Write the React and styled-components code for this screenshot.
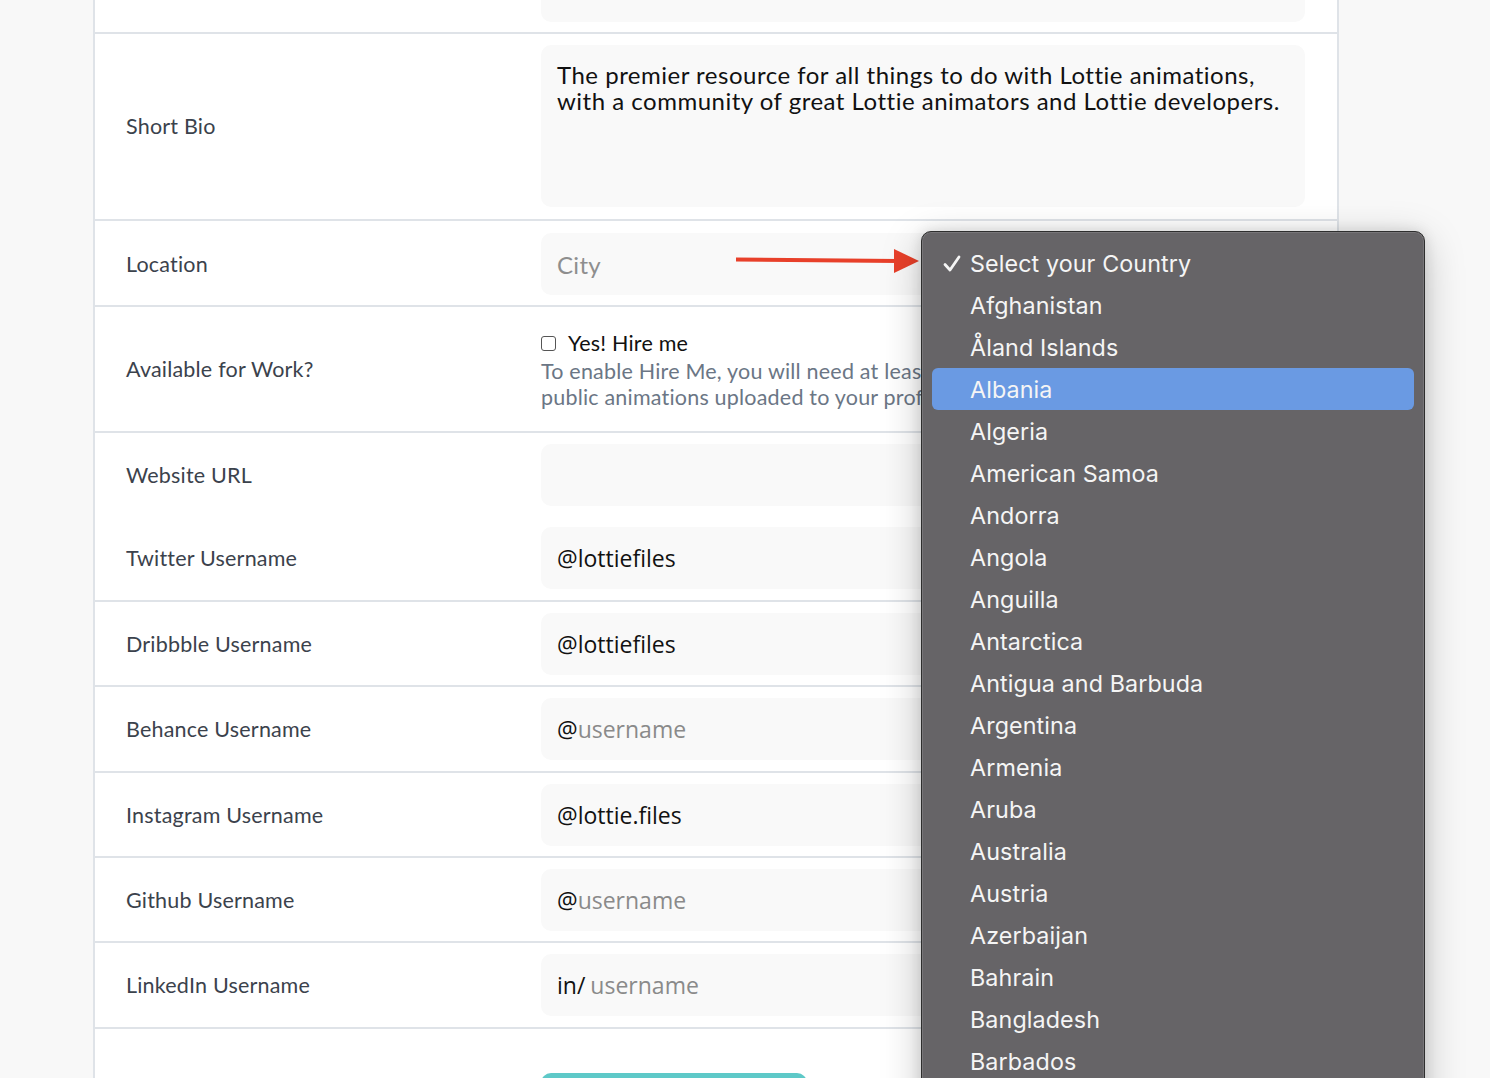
import React from "react";
import styled, { createGlobalStyle } from "styled-components";

const GlobalStyle = createGlobalStyle`
  html, body {
    margin: 0;
    padding: 0;
    background: #f8f8f8;
    overflow: hidden;
    height: 1078px;
  }
  * { box-sizing: border-box; }
`;

const Page = styled.div`
  position: relative;
  width: 1490px;
  height: 1078px;
  overflow: hidden;
  font-family: Lato, "Open Sans", sans-serif;
`;

const Card = styled.div`
  margin-left: 93px;
  margin-top: -51px;
  width: 1246px;
  background: #fff;
  border-left: 2px solid #dfe3e8;
  border-right: 2px solid #dfe3e8;
`;

const Row = styled.div`
  display: grid;
  grid-template-columns: 415px 1fr;
  align-items: center;
  padding: ${(p) => p.$pad || "11px 32px 10.4px 31px"};
  border-bottom: ${(p) => (p.$noBorder ? "none" : "2px solid #dfe3e8")};
`;

const Label = styled.div`
  font-size: 21.5px;
  color: #3b424c;
  letter-spacing: 0.2px;
`;

const Field = styled.div`
  height: ${(p) => p.$h || 62}px;
  background: #f9f9f9;
  border-radius: 10px;
  display: flex;
  align-items: ${(p) => (p.$top ? "flex-start" : "center")};
  padding: ${(p) => (p.$top ? "17px 16px" : "0 16px")};
  font-family: "Open Sans", sans-serif;
  font-size: 23px;
  color: #111;
`;

const BioText = styled.div`
  font-family: Lato, sans-serif;
  font-size: 24px;
  letter-spacing: 0.5px;
  line-height: 26px;
  color: #111;
`;

const Prefix = styled.span`
  color: #111;
  margin-right: ${(p) => p.$gap || 0}px;
`;

const Placeholder = styled.span`
  color: #8a8a8a;
`;

const CityText = styled.span`
  font-family: Lato, sans-serif;
  color: #8e8e8e;
  font-size: 24px;
  letter-spacing: 0.3px;
`;

const HireBox = styled.div`
  height: 124px;
  display: flex;
  flex-direction: column;
  justify-content: center;
  padding-top: 2px;
`;

const CheckLine = styled.label`
  display: flex;
  align-items: center;
  gap: 12px;
  font-size: 21.5px;
  letter-spacing: 0.2px;
  color: #111;
  line-height: 26px;
`;

const Check = styled.span`
  width: 15px;
  height: 15px;
  border: 1.5px solid #555;
  border-radius: 3px;
  background: #fff;
`;

const Helper = styled.div`
  font-size: 21.5px;
  letter-spacing: 0.2px;
  line-height: 26px;
  color: #6b7685;
  margin-top: 2px;
  white-space: nowrap;
`;

const ButtonRow = styled.div`
  padding: 44px 0 0 446px;
  height: 60px;
`;

const SaveButton = styled.div`
  width: 266px;
  height: 40px;
  background: #5ec9c8;
  border-radius: 10px;
`;

const Arrow = styled.svg`
  position: absolute;
  left: 730px;
  top: 244px;
`;

const Dropdown = styled.div`
  position: absolute;
  left: 921px;
  top: 231px;
  width: 504px;
  height: 900px;
  background: #666467;
  border: 1px solid #2e2e2e;
  border-radius: 10px;
  box-shadow: 0 0 0 1px rgba(255, 255, 255, 0.12) inset,
    0 10px 40px rgba(0, 0, 0, 0.22), 0 0 14px rgba(0, 0, 0, 0.12);
  padding: 10px 10px;
  font-family: Inter, "Liberation Sans", sans-serif;
`;

const Option = styled.div`
  position: relative;
  height: 42px;
  display: flex;
  align-items: center;
  padding-left: 38px;
  font-size: 23.3px;
  color: #f5f5f5;
  border-radius: 6px;
  background: ${(p) => (p.$active ? "#6a9ae3" : "transparent")};
  letter-spacing: 0.1px;
`;

const Tick = styled.svg`
  position: absolute;
  left: 10px;
  top: 12px;
`;

const countries = [
  "Select your Country",
  "Afghanistan",
  "Åland Islands",
  "Albania",
  "Algeria",
  "American Samoa",
  "Andorra",
  "Angola",
  "Anguilla",
  "Antarctica",
  "Antigua and Barbuda",
  "Argentina",
  "Armenia",
  "Aruba",
  "Australia",
  "Austria",
  "Azerbaijan",
  "Bahrain",
  "Bangladesh",
  "Barbados",
  "Belarus",
];

const socials = [
  { label: "Twitter Username", prefix: "@", value: "lottiefiles" },
  { label: "Dribbble Username", prefix: "@", value: "lottiefiles" },
  { label: "Behance Username", prefix: "@", placeholder: "username" },
  { label: "Instagram Username", prefix: "@", value: "lottie.files" },
  { label: "Github Username", prefix: "@", placeholder: "username" },
  { label: "LinkedIn Username", prefix: "in/", placeholder: "username", gap: 5 },
];

export default function App() {
  return (
    <Page>
      <GlobalStyle />
      <Card>
        <Row>
          <Label />
          <Field />
        </Row>
        <Row $pad="11px 32px 12px 31px">
          <Label>Short Bio</Label>
          <Field $h={162} $top>
            <BioText>
              The premier resource for all things to do with Lottie animations,
              <br />
              with a community of great Lottie animators and Lottie developers.
            </BioText>
          </Field>
        </Row>
        <Row $pad="12px 32px 10px 31px">
          <Label>Location</Label>
          <Field>
            <CityText>City</CityText>
          </Field>
        </Row>
        <Row $pad="0 32px 0 31px">
          <Label>Available for Work?</Label>
          <HireBox>
            <CheckLine>
              <Check />
              Yes! Hire me
            </CheckLine>
            <Helper>
              To enable Hire Me, you will need at least 3
              <br />
              public animations uploaded to your profile.
            </Helper>
          </HireBox>
        </Row>
        <Row $noBorder $pad="11px 32px 10px 31px">
          <Label>Website URL</Label>
          <Field />
        </Row>
        {socials.map((s) => (
          <Row key={s.label}>
            <Label>{s.label}</Label>
            <Field>
              <Prefix $gap={s.gap}>{s.prefix}</Prefix>
              {s.value ? s.value : <Placeholder>{s.placeholder}</Placeholder>}
            </Field>
          </Row>
        ))}
        <ButtonRow>
          <SaveButton />
        </ButtonRow>
      </Card>

      <Arrow width="192" height="32" viewBox="0 0 192 32">
        <line x1="6" y1="15.5" x2="168" y2="17" stroke="#e8402a" strokeWidth="4" />
        <polygon points="164,5 189,17 164,29" fill="#e8402a" />
      </Arrow>

      <Dropdown>
        {countries.map((c, i) => (
          <Option key={c} $active={c === "Albania"}>
            {i === 0 && (
              <Tick width="20" height="20" viewBox="0 0 20 20">
                <path
                  d="M3 10.5 L8 16 L17 3"
                  fill="none"
                  stroke="#f5f5f5"
                  strokeWidth="2.8"
                  strokeLinecap="round"
                  strokeLinejoin="round"
                />
              </Tick>
            )}
            {c}
          </Option>
        ))}
      </Dropdown>
    </Page>
  );
}
